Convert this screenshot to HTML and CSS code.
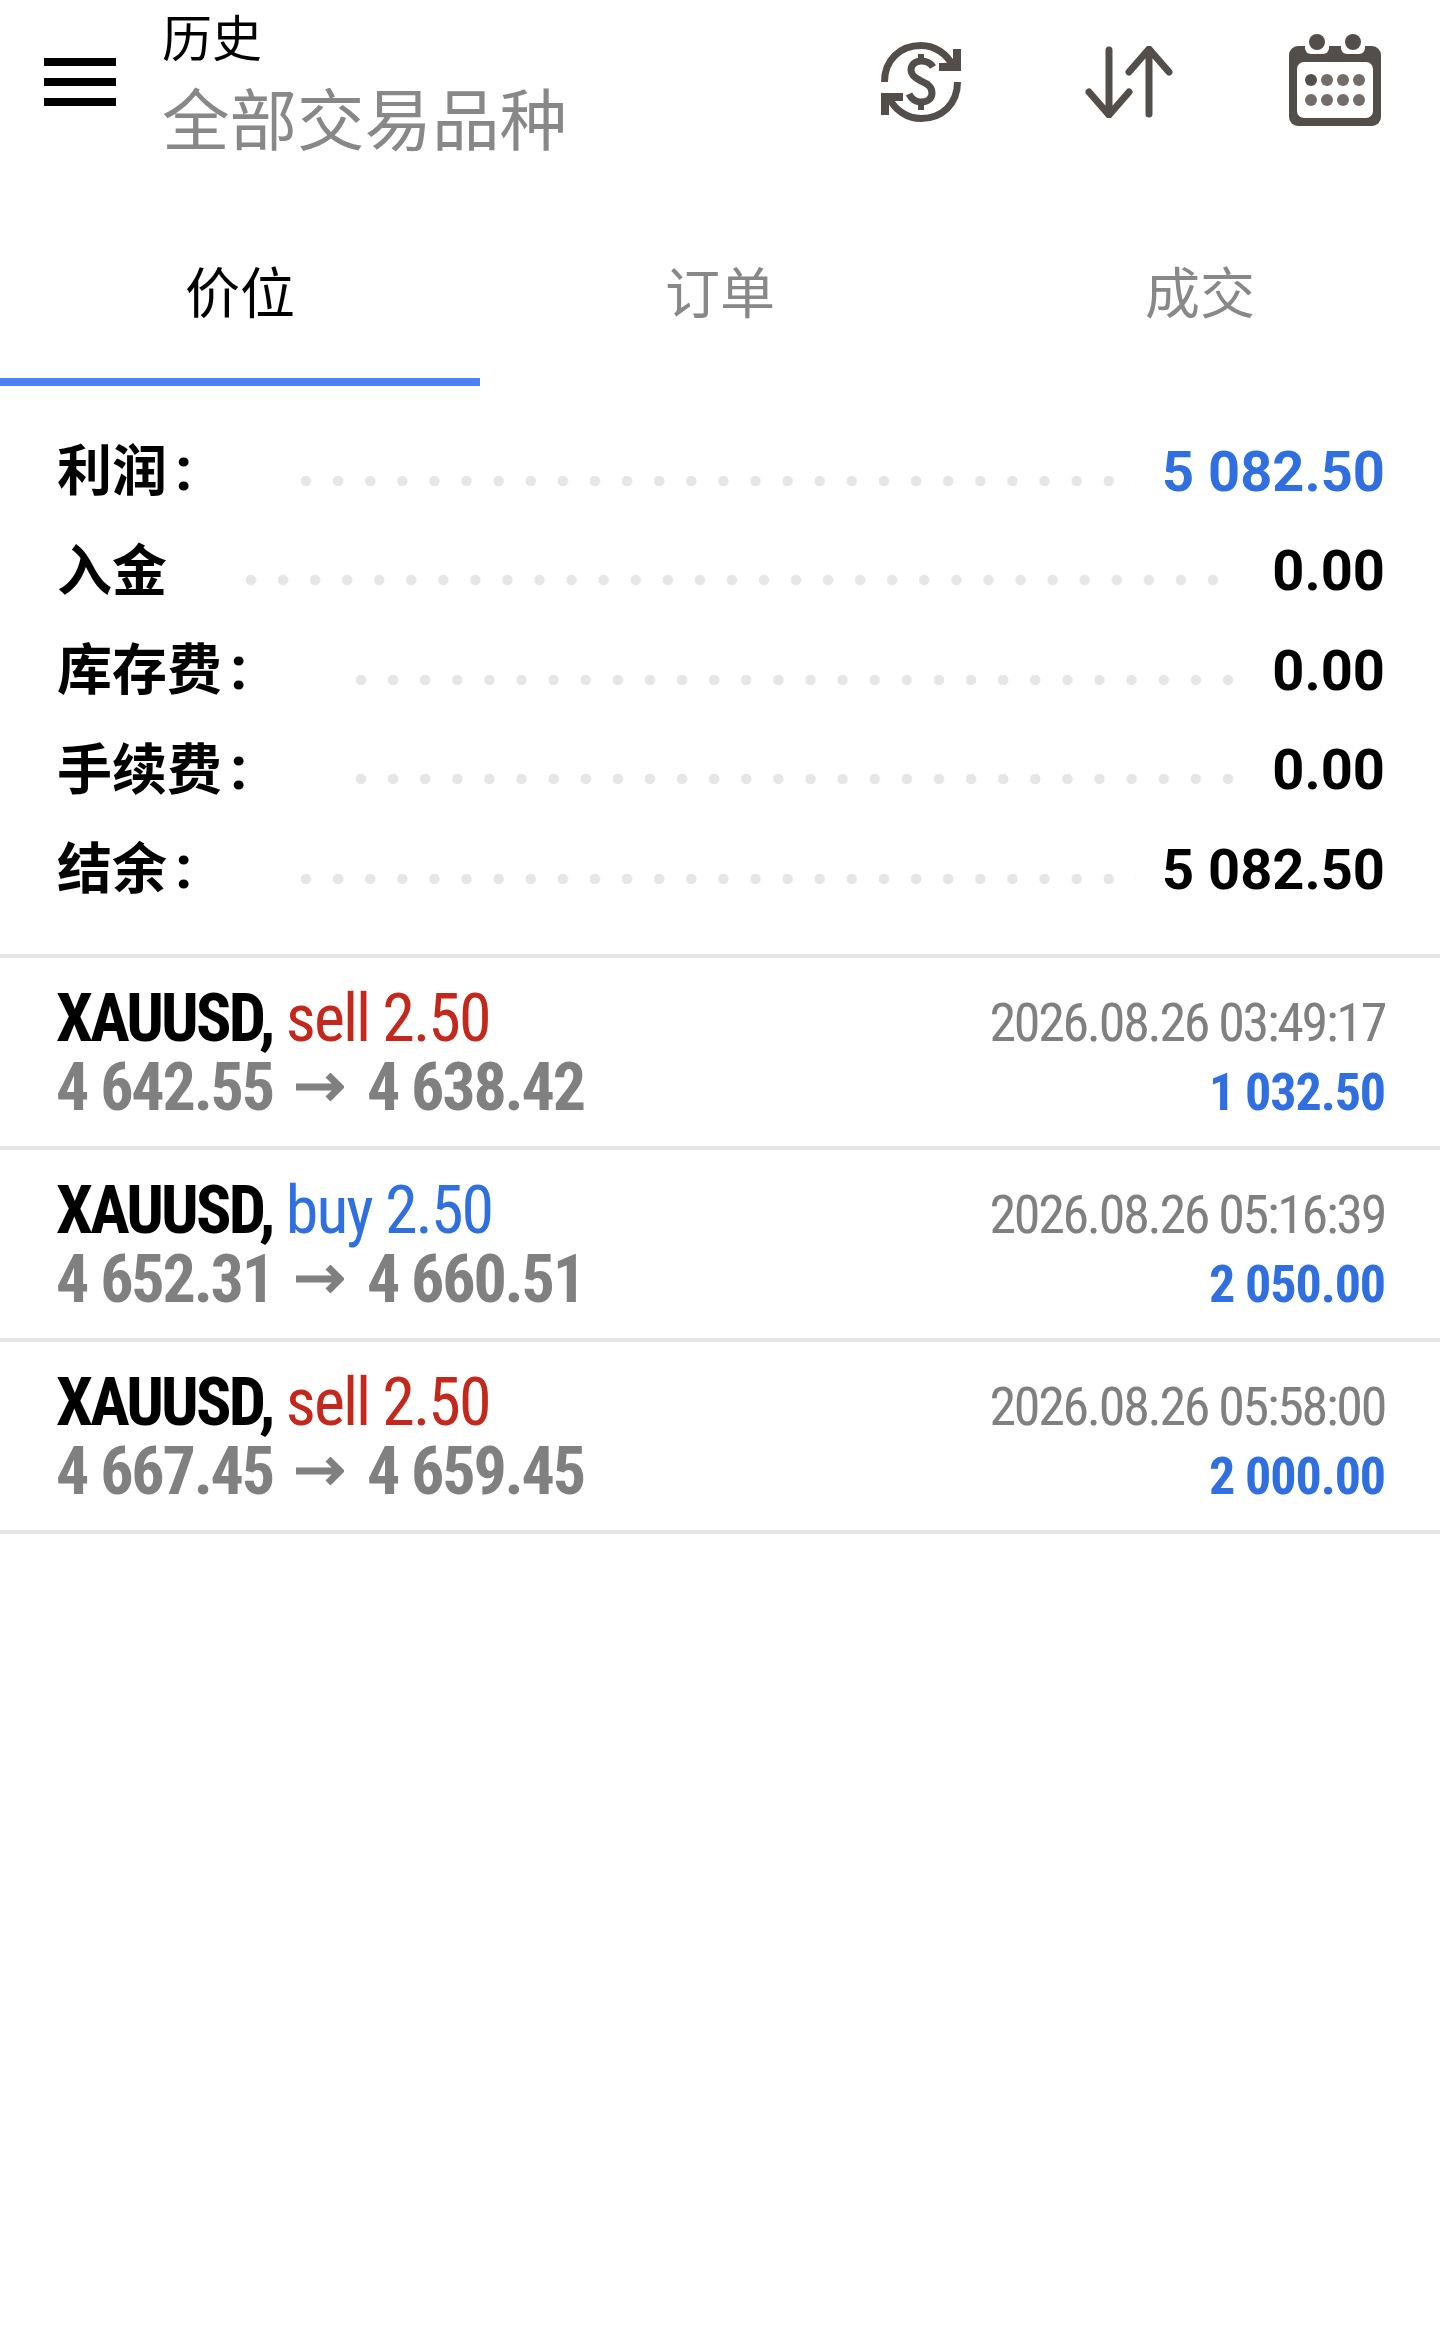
FILE: index.html
```html
<!DOCTYPE html>
<html lang="zh-CN">
<head>
    <meta charset="UTF-8">
    <meta name="viewport" content="width=device-width, initial-scale=1.0">
    <title>历史</title>
    <link rel="stylesheet" href="styles.css">
</head>
<body>
    <header class="toolbar">
        <div class="menu-icon"><span></span><span></span><span></span></div>
        <div class="heading">
            <div class="heading-title">历史</div>
            <div class="heading-sub">全部交易品种</div>
        </div>
        <svg class="icon icon-sync" viewBox="0 0 80 80" width="80" height="80">
            <g fill="none" stroke="#544e4b" stroke-width="7">
                <path d="M3.5 40C3.5 18 19 3.5 40 3.5C54 3.5 66 12 72 24"/>
                <path d="M76.500 40C76.500 62 61 76.500 40 76.500C26 76.500 14 68 8 56"/>
                <path d="M52 25C49 20 45 19 40 19C34 19 30 23 30 28C30 33 34 36 40 39C47 42 51 45 51 51C51 57 46 60 40 60C35 60 31 58 28 52"/>
                <path d="M40 12V19M40 60V68" stroke-width="6"/>
            </g>
            <path fill="#544e4b" d="M72 7H80V29H58V21H72Z"/>
            <path fill="#544e4b" d="M8 73H0V51H22V59H8Z"/>
        </svg>
        <svg class="icon icon-sort" viewBox="0 0 88 72" width="88" height="72">
            <g fill="none" stroke="#544e4b" stroke-width="7" stroke-linecap="round" stroke-linejoin="round">
                <path d="M24 4V68M4 46L24 69L44 46"/>
                <path d="M64 68V4M44 26L64 3L84 26"/>
            </g>
        </svg>
        <svg class="icon icon-calendar" viewBox="0 0 92 92" width="92" height="92">
            <rect y="12" width="92" height="80" rx="9" fill="#544e4b"/>
            <rect x="16" y="8" width="24" height="12" rx="6" fill="#fff"/>
            <rect x="52" y="8" width="24" height="12" rx="6" fill="#fff"/>
            <rect x="16" y="0" width="24" height="14" fill="#fff"/>
            <rect x="52" y="0" width="24" height="14" fill="#fff"/>
            <ellipse cx="28" cy="8" rx="8" ry="8" fill="#544e4b"/>
            <ellipse cx="64" cy="8" rx="8" ry="8" fill="#544e4b"/>
            <rect x="8" y="28" width="76" height="56" rx="7" fill="#fff"/>
            <g fill="#736c69">
                <circle cx="22" cy="46" r="6" fill="#544e4b"/>
                <circle cx="38" cy="46" r="6"/>
                <circle cx="54" cy="46" r="6"/>
                <circle cx="70" cy="46" r="6"/>
                <circle cx="22" cy="66" r="6"/>
                <circle cx="38" cy="66" r="6"/>
                <circle cx="54" cy="66" r="6"/>
                <circle cx="70" cy="66" r="6"/>
            </g>
        </svg>
    </header>

    <nav class="tabs">
        <div class="tab tab-active">价位</div>
        <div class="tab">订单</div>
        <div class="tab">成交</div>
    </nav>

    <section class="summary">
        <div class="summary-row">
            <span class="summary-label">利润<span class="colon">:</span></span>
            <span class="dots"></span>
            <span class="summary-value value-blue">5 082.50</span>
        </div>
        <div class="summary-row">
            <span class="summary-label">入金</span>
            <span class="dots dots-plain"></span>
            <span class="summary-value">0.00</span>
        </div>
        <div class="summary-row">
            <span class="summary-label">库存费<span class="colon">:</span></span>
            <span class="dots dots-fee"></span>
            <span class="summary-value">0.00</span>
        </div>
        <div class="summary-row">
            <span class="summary-label">手续费<span class="colon">:</span></span>
            <span class="dots dots-fee"></span>
            <span class="summary-value">0.00</span>
        </div>
        <div class="summary-row">
            <span class="summary-label">结余<span class="colon">:</span></span>
            <span class="dots"></span>
            <span class="summary-value">5 082.50</span>
        </div>
    </section>

    <section class="trades">
        <div class="trade">
            <div class="trade-line">
                <div class="trade-name"><b>XAUUSD,</b> <span class="sell">sell 2.50</span></div>
                <div class="trade-time">2026.08.26 03:49:17</div>
            </div>
            <div class="trade-line">
                <div class="trade-price">4 642.55<svg class="arrow" viewBox="0 0 48 28" width="48" height="28"><path d="M0 14H44M32 2L44 14L32 26" fill="none" stroke="#808080" stroke-width="7"/></svg>4 638.42</div>
                <div class="trade-profit">1 032.50</div>
            </div>
        </div>
        <div class="trade">
            <div class="trade-line">
                <div class="trade-name"><b>XAUUSD,</b> <span class="buy">buy 2.50</span></div>
                <div class="trade-time">2026.08.26 05:16:39</div>
            </div>
            <div class="trade-line">
                <div class="trade-price">4 652.31<svg class="arrow" viewBox="0 0 48 28" width="48" height="28"><path d="M0 14H44M32 2L44 14L32 26" fill="none" stroke="#808080" stroke-width="7"/></svg>4 660.51</div>
                <div class="trade-profit">2 050.00</div>
            </div>
        </div>
        <div class="trade">
            <div class="trade-line">
                <div class="trade-name"><b>XAUUSD,</b> <span class="sell">sell 2.50</span></div>
                <div class="trade-time">2026.08.26 05:58:00</div>
            </div>
            <div class="trade-line">
                <div class="trade-price">4 667.45<svg class="arrow" viewBox="0 0 48 28" width="48" height="28"><path d="M0 14H44M32 2L44 14L32 26" fill="none" stroke="#808080" stroke-width="7"/></svg>4 659.45</div>
                <div class="trade-profit">2 000.00</div>
            </div>
        </div>
    </section>
</body>
</html>
```

FILE: styles.css
```css
body {
    margin: 0;
    background: #fff;
    color: #000;
    font-family: Roboto, "Noto Sans CJK SC", sans-serif;
}
.toolbar {
    display: flex;
    align-items: center;
    height: 160px;
    padding-left: 44px;
    padding-right: 59px;
}
.menu-icon {
    display: flex;
    flex-direction: column;
    gap: 12px;
    width: 72px;
    margin-top: 4px;
}
.menu-icon span {
    height: 8px;
    background: #000;
}
.heading {
    margin-left: 46px;
    padding-top: 2px;
}
.heading-title {
    font-size: 50px;
    line-height: 80px;
}
.heading-sub {
    font-size: 67.5px;
    line-height: 80px;
    margin-top: 2px;
    color: #888;
}
.icon {
    display: block;
    flex: none;
}
.icon-sync {
    margin-left: auto;
    margin-top: 4px;
}
.icon-sort {
    margin-left: 124px;
    margin-top: 4px;
}
.icon-calendar {
    margin-left: 116px;
}
.tabs {
    display: flex;
    height: 226px;
}
.tab {
    flex: 1;
    display: flex;
    align-items: center;
    justify-content: center;
    padding-top: 40px;
    padding-bottom: 8px;
    font-size: 55px;
    color: #888;
}
.tab-active {
    color: #000;
    padding-bottom: 0;
    border-bottom: 8px solid #4d82f6;
}
.summary {
    padding: 36px 55px 34px 57px;
}
.summary-row {
    display: flex;
    align-items: center;
    height: 99.5px;
}
.summary-label {
    font-size: 55px;
    font-weight: 700;
    margin-right: 109px;
    margin-bottom: 11px;
    white-space: nowrap;
}
.colon {
    font-size: 62px;
    margin-left: 8px;
}
.dots {
    flex: 1;
    height: 10px;
    margin-top: 18px;
    margin-right: 26px;
    background-image: radial-gradient(circle at 5px 5px, #e6e6e6 5px, transparent 5.5px);
    background-size: 32px 10px;
    background-repeat: space no-repeat;
}
.dots-plain {
    margin-right: 32px;
    margin-left: -30px;
}
.dots-fee {
    margin-right: 17px;
}
.summary-value {
    font-size: 56px;
    font-weight: 700;
    white-space: nowrap;
}
.value-blue {
    color: #2f6fe0;
}
.trades {
    border-top: 4px solid #e6e6e6;
}
.trade {
    display: flex;
    flex-direction: column;
    justify-content: center;
    height: 186px;
    padding: 2px 55px 0 56px;
    border-bottom: 4px solid #e6e6e6;
}
.trade-line {
    display: flex;
    justify-content: space-between;
    align-items: baseline;
    height: 69px;
    line-height: 69px;
    font-stretch: 75%;
}
.trade-name {
    font-size: 66px;
    letter-spacing: -2px;
}
.trade-name b {
    font-weight: 700;
    letter-spacing: -2.8px;
}
.sell {
    color: #c4281c;
}
.buy {
    color: #2f6fe0;
}
.trade-time {
    font-size: 54px;
    letter-spacing: -2.3px;
    color: #808080;
}
.trade-price {
    font-size: 66px;
    font-weight: 700;
    letter-spacing: -2.2px;
    color: #808080;
}
.arrow {
    margin: 0 23px;
    vertical-align: 9px;
}
.trade-profit {
    font-size: 52px;
    font-weight: 700;
    letter-spacing: -1.1px;
    color: #2f6fe0;
}
```
